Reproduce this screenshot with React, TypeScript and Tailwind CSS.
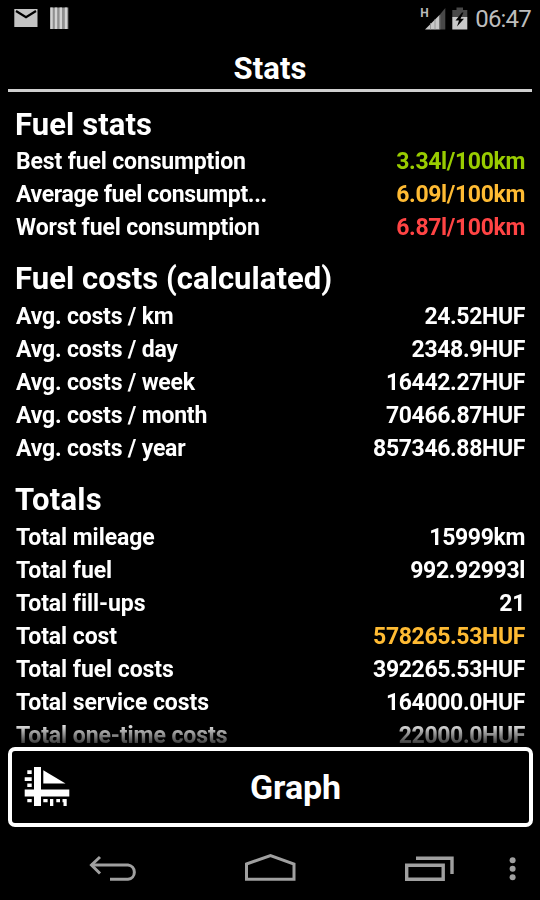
import type { ReactNode } from "react";

type Row = {
  label: string;
  value: string;
  color?: string;
  labelClass?: string;
};

type Section = {
  title: string;
  titleClass: string;
  labelClass: string;
  rows: Row[];
};

const SECTIONS: Section[] = [
  {
    title: "Fuel stats",
    titleClass: "tracking-[0.1px]",
    labelClass: "tracking-[-0.15px]",
    rows: [
      { label: "Best fuel consumption", value: "3.34l/100km", color: "text-[#99cc00]" },
      {
        label: "Average fuel consumpt...",
        value: "6.09l/100km",
        color: "text-[#ffbb33]",
        labelClass: "tracking-[-0.34px]",
      },
      { label: "Worst fuel consumption", value: "6.87l/100km", color: "text-[#ff4444]" },
    ],
  },
  {
    title: "Fuel costs (calculated)",
    titleClass: "tracking-[0.05px]",
    labelClass: "tracking-[-0.2px]",
    rows: [
      { label: "Avg. costs / km", value: "24.52HUF" },
      { label: "Avg. costs / day", value: "2348.9HUF" },
      { label: "Avg. costs / week", value: "16442.27HUF" },
      { label: "Avg. costs / month", value: "70466.87HUF" },
      { label: "Avg. costs / year", value: "857346.88HUF" },
    ],
  },
  {
    title: "Totals",
    titleClass: "tracking-[0.3px]",
    labelClass: "tracking-[-0.07px]",
    rows: [
      { label: "Total mileage", value: "15999km" },
      { label: "Total fuel", value: "992.92993l" },
      { label: "Total fill-ups", value: "21" },
      { label: "Total cost", value: "578265.53HUF", color: "text-[#ffbb33]" },
      { label: "Total fuel costs", value: "392265.53HUF" },
      { label: "Total service costs", value: "164000.0HUF" },
      { label: "Total one-time costs", value: "22000.0HUF" },
    ],
  },
];

const StatusBar = () => (
  <div className="flex h-[37px] shrink-0 items-center justify-between pl-[14px] pr-[9px]">
    <div className="flex items-center gap-[12px]">
      <svg width="24" height="20" viewBox="0 0 24 20">
        <rect x="0.3" y="0" width="23.2" height="18" fill="#c4c4c4" />
        <path d="M2 2L12 8.2L22 2" fill="none" stroke="#000" strokeWidth="2.2" />
      </svg>
      <svg width="20" height="24" viewBox="0 0 20 24">
        <rect x="0.3" y="0.5" width="18" height="21.5" fill="#8f8f8f" />
        <path d="M1.5 0.5V22M6 0.5V22M10.8 0.5V22M16 0.5V22" stroke="#d2d2d2" strokeWidth="2.4" />
      </svg>
    </div>
    <div className="flex items-center">
      <span className="mb-[11px] w-[8px] text-[12px] leading-[12px] font-bold text-[#bbb]">H</span>
      <svg className="-ml-[3px]" width="22" height="24" viewBox="0 0 22 24">
        <path d="M0 22.5L14.5 8V22.5Z" fill="#c8c8c8" />
        <path d="M14.5 8L20.3 1V22.5H14.5Z" fill="#484848" />
        <path d="M5.5 16V22.5M10 12V22.5M14.8 8V22.5" stroke="#8a8a8a" strokeWidth="0.8" />
      </svg>
      <svg className="ml-[5px]" width="16" height="24" viewBox="0 0 16 24">
        <path d="M4.5 0.5H11V3H15.3V10.5H0.3V3H4.5Z" fill="#484848" />
        <rect x="0.3" y="10" width="15" height="12.5" fill="#c8c8c8" />
        <path d="M10 5.5L3.5 13.5H7L5 19.5L12 11.7H8.5L11.5 5.5Z" fill="#000" />
      </svg>
      <span className="ml-[7px] text-[24px] leading-[28px] tracking-[-0.8px] text-[#bdbdbd]">06:47</span>
    </div>
  </div>
);

const StatRow = ({ label, value, color = "text-white", labelClass }: Row) => (
  <div className="flex h-[33.1px] items-center justify-between pl-px whitespace-nowrap text-[23px] font-bold">
    <span className={labelClass}>{label}</span>
    <span className={`tracking-[-0.36px] ${color}`}>{value}</span>
  </div>
);

const NavButton = ({ className, children }: { className: string; children: ReactNode }) => (
  <button className={className}>{children}</button>
);

const NavBar = () => (
  <div className="flex h-[60px] items-start pt-[12px] text-[#a0a0a0]">
    <NavButton className="ml-[88px]">
      <svg width="50" height="32" viewBox="0 0 50 32" fill="none" stroke="currentColor" strokeWidth="3">
        <path d="M3 13H40A7.2 7.2 0 0 1 40 27.3H22" />
        <path d="M12 5L3.5 13L12 21.5" />
      </svg>
    </NavButton>
    <NavButton className="ml-[106px]">
      <svg width="52" height="32" viewBox="0 0 52 32" fill="none" stroke="currentColor" strokeWidth="3">
        <path d="M2.5 12L26.5 3.5L50 12V27.3H2.5Z" />
      </svg>
    </NavButton>
    <NavButton className="ml-[108px]">
      <svg width="50" height="32" viewBox="0 0 50 32" fill="none" stroke="currentColor" strokeWidth="3.4">
        <path d="M2.7 13.2H39.2V27.3H2.7Z" />
        <path d="M12 6.2H48V22" />
      </svg>
    </NavButton>
    <NavButton className="ml-[54px]">
      <svg width="10" height="32" viewBox="0 0 10 32" fill="currentColor">
        <circle cx="4.6" cy="8.3" r="3" />
        <circle cx="4.6" cy="16.7" r="3" />
        <circle cx="4.6" cy="25.2" r="3" />
      </svg>
    </NavButton>
  </div>
);

const GraphIcon = () => (
  <svg width="46" height="40" viewBox="0 0 46 40" fill="#fff">
    <path d="M10 0H17V39H10Z" />
    <path d="M0.7 22.5H45.3V29.5H0.7Z" />
    <path d="M19.3 3.3L41.5 16.5H19.3Z" />
    <path d="M3.3 3.3H7.7V7H3.3ZM0.7 10.3H7.7V14H0.7ZM3.3 16.5H7.7V20H3.3ZM3.3 32H7.7V35.3H3.3Z" />
    <path d="M19.3 32H23.6V35.3H19.3ZM26 32H29.3V39H26ZM32.3 32H36V35.3H32.3ZM38.5 32H42.7V39H39.5V35.3H38.5Z" />
  </svg>
);

export default function App() {
  return (
    <div className="flex h-[900px] w-[540px] flex-col overflow-hidden bg-black font-[Roboto,sans-serif] text-white">
      <StatusBar />

      <header className="mx-[8px] flex h-[55px] shrink-0 items-center justify-center border-b-[3px] border-[#cfcfcf] pt-[12px] text-[31px] font-bold tracking-[0.1px]">
        Stats
      </header>

      <main className="h-[653px] shrink-0 overflow-hidden px-[15px] pt-[12.2px] [mask-image:linear-gradient(to_bottom,#000_630px,transparent_658px)]">
        {SECTIONS.map((section) => (
          <section key={section.title} className="mb-[14px]">
            <h2
              className={`flex h-[41.5px] items-center text-[31px] font-bold whitespace-nowrap ${section.titleClass}`}
            >
              {section.title}
            </h2>
            {section.rows.map((row) => (
              <StatRow key={row.label} labelClass={section.labelClass} {...row} />
            ))}
          </section>
        ))}
      </main>

      <div className="h-[95px] shrink-0 px-[7.5px] pt-[1.5px]">
        <button className="relative flex h-[80px] w-full items-center justify-center rounded-[7px] border-[4.5px] border-white pt-[2px] pl-[51px] text-[34px] font-bold tracking-[-0.1px]">
          <span className="absolute top-[16px] left-[12px]">
            <GraphIcon />
          </span>
          Graph
        </button>
      </div>

      <NavBar />
    </div>
  );
}
